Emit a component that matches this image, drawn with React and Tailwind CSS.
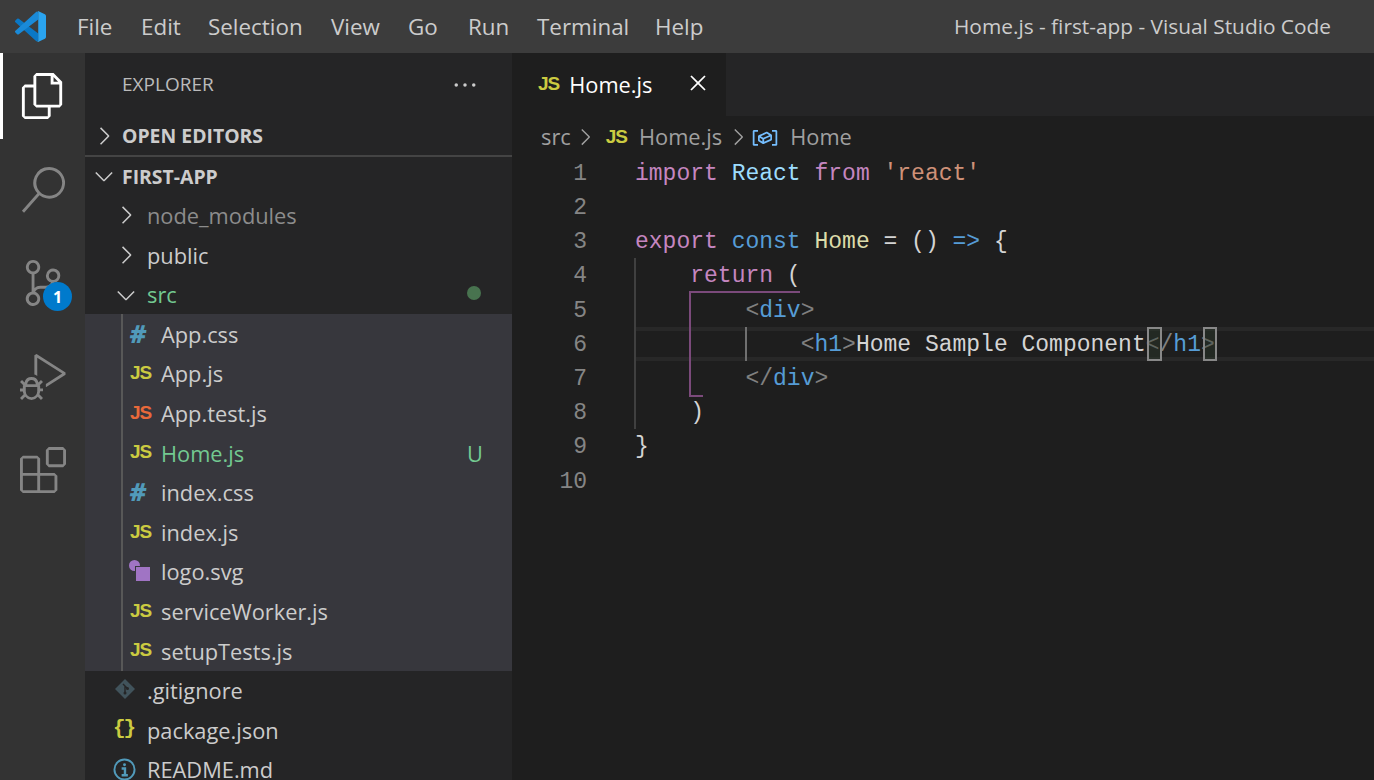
import React from "react";
import {
  VscFiles,
  VscSearch,
  VscSourceControl,
  VscDebugAlt,
  VscExtensions,
  VscChevronRight,
  VscChevronDown,
  VscClose,
  VscEllipsis,
  VscSymbolVariable,
} from "react-icons/vsc";

const menus = [
  ["File", "w-[64px]"],
  ["Edit", "w-[67px]"],
  ["Selection", "w-[123px]"],
  ["View", "w-[77px]"],
  ["Go", "w-[60px]"],
  ["Run", "w-[69px]"],
  ["Terminal", "w-[118px]"],
  ["Help", "w-[60px]"],
];

function Logo() {
  return (
    <svg viewBox="0 0 24 24" className="w-[31px] h-[31px] ml-[15px] mr-[31px]">
      <path
        fill="#0a78c6"
        d="M.33 7.26 1.65 6.06a1 1 0 0 1 1.28-.06L18 17.45v5.05a1.5 1.5 0 0 1-1.5.99L.33 8.74a1 1 0 0 1 0-1.48z"
      />
      <path
        fill="#1a8ad8"
        d="M.33 16.74 1.65 17.94a1 1 0 0 0 1.28.06L18 6.55V1.5A1.5 1.5 0 0 0 16.5.5L.33 15.26a1 1 0 0 0 0 1.48z"
      />
      <path
        fill="#2aa4f0"
        d="M16.5.5a1.49 1.49 0 0 1 1.71-.29l4.94 2.38A1.5 1.5 0 0 1 24 3.94v16.12a1.5 1.5 0 0 1-.85 1.35l-4.94 2.38a1.49 1.49 0 0 1-1.71-.29c.55.55 1.5.16 1.5-.62V1.12c0-.78-.95-1.17-1.5-.62z"
      />
    </svg>
  );
}

function JsIcon({ color = "text-[#cbcb41]" }) {
  return (
    <span className={`font-['Liberation_Sans'] font-bold text-[19px] leading-none tracking-[-1px] mb-[2px] ${color}`}>
      JS
    </span>
  );
}

function HashIcon() {
  return <span className="font-['Open_Sans'] font-extrabold text-[25px] leading-none -skew-x-6 mb-[2px] text-[#519aba]">#</span>;
}

function SvgFileIcon() {
  return (
    <svg viewBox="0 0 22 22" className="w-[22px] h-[22px] ml-[-2px] mb-[3px]">
      <circle cx="6.500" cy="6.500" r="5.500" fill="#a074c4" />
      <rect x="7" y="7" width="15" height="15" fill="#37373d" />
      <rect x="8" y="8" width="14" height="14" fill="#a074c4" />
    </svg>
  );
}

function GitIcon() {
  return (
    <svg viewBox="0 0 20 20" className="w-[20px] h-[20px] mb-[3px]">
      <path fill="#41535b" d="M10 0l10 10-10 10L0 10z" />
      <path stroke="#252526" strokeWidth="1.4" fill="none" d="M8 5l4.500 4.500M10 7.500V14" />
      <circle cx="10" cy="14" r="1.500" fill="#252526" />
      <circle cx="12.500" cy="9.500" r="1.500" fill="#252526" />
    </svg>
  );
}

function InfoIcon() {
  return (
    <svg viewBox="0 0 24 24" className="w-[23px] h-[23px]" fill="none">
      <circle cx="12" cy="12" r="10.500" stroke="#519aba" strokeWidth="2" />
      <circle cx="12" cy="7" r="1.500" fill="#519aba" />
      <path stroke="#519aba" strokeWidth="2.500" d="M9 11h3.500v7M9 18h6.500" />
    </svg>
  );
}

// one row of the tree, all rows have the same height
function Row({ pad, icon, iconClass = "w-[31px]", children, className = "", badge }) {
  return (
    <div className={`flex items-center h-[39.6px] shrink-0 ${pad} ${className}`}>
      {icon && <span className={`flex items-center shrink-0 ${iconClass}`}>{icon}</span>}
      <span className="flex-1 pt-[2px]">{children}</span>
      {badge}
    </div>
  );
}

const srcFiles = [
  ["App.css", <HashIcon />],
  ["App.js", <JsIcon />],
  ["App.test.js", <JsIcon color="text-[#e8693a]" />],
  ["Home.js", <JsIcon />],
  ["index.css", <HashIcon />],
  ["index.js", <JsIcon />],
  ["logo.svg", <SvgFileIcon />],
  ["serviceWorker.js", <JsIcon />],
  ["setupTests.js", <JsIcon />],
];

function Sidebar() {
  return (
    <div className="w-[427px] shrink-0 bg-[#252526] flex flex-col text-[#cccccc] text-[21.8px] overflow-hidden">
      <div className="flex items-center justify-between h-[63px] pl-[37px] pr-[33px] shrink-0">
        <span className="text-[19px] text-[#bbbbbb]">EXPLORER</span>
        <VscEllipsis className="text-[#cccccc] w-[28px] h-[28px]" />
      </div>
      <div className="flex items-center h-[39px] pl-[5px] border-b-2 border-[#444444] box-content shrink-0 font-bold text-[19.4px]">
        <VscChevronRight className="w-[28px] h-[28px] mr-[4px]" />
        <span>OPEN EDITORS</span>
      </div>
      <div className="flex items-center h-[38.6px] pl-[5px] shrink-0 font-bold text-[19.4px]">
        <VscChevronDown className="w-[28px] h-[28px] mr-[4px]" />
        <span>FIRST-APP</span>
      </div>
      <Row pad="pl-[27px]" iconClass="w-[35px]" icon={<VscChevronRight className="w-[28px] h-[28px]" />}>
        <span className="text-[#8c8c8c]">node_modules</span>
      </Row>
      <Row pad="pl-[27px]" iconClass="w-[35px]" icon={<VscChevronRight className="w-[28px] h-[28px]" />}>
        public
      </Row>
      <Row
        pad="pl-[27px] pr-[31px]"
        iconClass="w-[35px]"
        icon={<VscChevronDown className="w-[28px] h-[28px]" />}
        badge={<span className="w-[14px] h-[14px] rounded-full bg-[#48734f] mb-[3px]" />}
      >
        <span className="text-[#73c991]">src</span>
      </Row>
      <div className="bg-[#37373d] flex flex-col shrink-0 relative">
        <div className="absolute left-[36px] top-0 bottom-0 w-[2px] bg-[#585858]" />
        {srcFiles.map(([name, icon]) => (
          <Row
            key={name}
            pad="pl-[45px] pr-[29px]"
            icon={icon}
            iconClass="w-[31px]"
            badge={name === "Home.js" ? <span className="text-[#73c991] pt-[2px]">U</span> : null}
          >
            <span className={name === "Home.js" ? "text-[#73c991]" : ""}>{name}</span>
          </Row>
        ))}
      </div>
      <Row pad="pl-[30px]" icon={<GitIcon />} iconClass="w-[32px]">
        .gitignore
      </Row>
      <Row
        pad="pl-[28px]"
        iconClass="w-[34px]"
        icon={<span className="font-['Liberation_Mono'] font-bold text-[21px] text-[#cbcb41] tracking-[-2px] mb-[3px]">{"{}"}</span>}
      >
        package.json
      </Row>
      <Row pad="pl-[28px]" icon={<InfoIcon />} iconClass="w-[34px]">
        README.md
      </Row>
    </div>
  );
}

const k = "text-[#c586c0]";
const v = "text-[#9cdcfe]";
const s = "text-[#ce9178]";
const b = "text-[#569cd6]";
const f = "text-[#dcdcaa]";
const g = "text-[#808080]";

const lines = [
  [[k, "import"], ["", " "], [v, "React"], ["", " "], [k, "from"], ["", " "], [s, "'react'"]],
  [],
  [[k, "export"], ["", " "], [b, "const"], ["", " "], [f, "Home"], ["", " = () "], [b, "=>"], ["", " {"]],
  [["", "    "], [k, "return"], ["", " ("]],
  [["", "        "], [g, "<"], [b, "div"], [g, ">"]],
  [
    ["", "            "],
    [g, "<"],
    [b, "h1"],
    [g, ">"],
    ["", "Home Sample Component"],
    [g, "<"],
    [g, "/"],
    [b, "h1"],
    [g, ">"],
  ],
  [["", "        "], [g, "</"], [b, "div"], [g, ">"]],
  [["", "    )"]],
  [["", "}"]],
  [],
];

function Code() {
  return (
    <div className="relative flex-1 font-['Liberation_Mono'] text-[23px] text-[#d4d4d4]">
      {lines.map((tokens, i) => (
        <div key={i} className="relative flex items-center h-[34.2px] whitespace-pre">
          {i === 5 && (
            <div className="absolute left-[123px] right-0 top-0 bottom-0 border-y-[4px] border-[#282828]" />
          )}
          <div className="w-[75px] pt-[2px] text-right text-[#858585] shrink-0">{i + 1}</div>
          <div className="pl-[48px] pt-[2px] relative">
            {tokens.map(([c, t], j) => (
              <span key={j} className={c}>
                {t}
              </span>
            ))}
          </div>
        </div>
      ))}
      {/* indent guides */}
      <div className="absolute left-[122px] top-[102px] w-[2px] h-[171px] bg-[#404040]" />
      <div className="absolute left-[233px] top-[171px] w-[2px] h-[34px] bg-[#707070]" />
      {/* bracket pair colour */}
      <div className="absolute left-[177px] top-[135px] w-[111px] h-[2px] bg-[#7b4a7b]" />
      <div className="absolute left-[177px] top-[135px] w-[2px] h-[106px] bg-[#7b4a7b]" />
      <div className="absolute left-[177px] top-[239px] w-[14px] h-[2px] bg-[#7b4a7b]" />
      {/* matching bracket boxes */}
      <div className="absolute left-[635px] top-[171px] w-[15px] h-[34px] border-2 border-[#888888] bg-[#2a3a2a]/40" />
      <div className="absolute left-[691px] top-[171px] w-[14px] h-[34px] border-2 border-[#888888] bg-[#2a3a2a]/40" />
    </div>
  );
}

function Editor() {
  return (
    <div className="flex-1 bg-[#1e1e1e] flex flex-col min-w-0">
      <div className="flex h-[63px] bg-[#252526] shrink-0">
        <div className="w-[214px] bg-[#1e1e1e] flex items-center pl-[26px] text-[21.8px] text-white">
          <JsIcon />
          <span className="ml-[10px] pt-[2px]">Home.js</span>
          <VscClose className="w-[28px] h-[28px] ml-[32px] mb-[3px]" />
        </div>
      </div>
      <div className="flex items-center h-[40px] shrink-0 pl-[29px] pt-[2px] text-[21.8px] text-[#a0a0a0]">
        <span>src</span>
        <VscChevronRight className="w-[26px] h-[26px] ml-[1px] mr-[8px]" />
        <JsIcon />
        <span className="ml-[12px]">Home.js</span>
        <VscChevronRight className="w-[26px] h-[26px] ml-[3px]" />
        <VscSymbolVariable className="w-[28px] h-[28px] text-[#75beff]" />
        <span className="ml-[11px]">Home</span>
      </div>
      <Code />
    </div>
  );
}

function ActivityBar() {
  const icons = [VscFiles, VscSearch, VscSourceControl, VscDebugAlt, VscExtensions];
  return (
    <div className="w-[85px] shrink-0 bg-[#333333] flex flex-col gap-[7.6px]">
      {icons.map((Icon, i) => (
        <div key={i} className="relative h-[86px] flex items-center justify-center">
          {i === 0 && <div className="absolute left-0 top-0 bottom-0 w-[3px] bg-white" />}
          <Icon className={`w-[46px] h-[46px] ${i === 0 ? "text-white" : "text-[#858585]"}`} />
          {i === 2 && (
            <span className="absolute left-[43px] top-[42px] w-[29px] h-[29px] rounded-full bg-[#007acc] text-white text-[16px] font-bold flex items-center justify-center">
              1
            </span>
          )}
        </div>
      ))}
    </div>
  );
}

export default function App() {
  return (
    <div className="w-[1374px] h-[780px] overflow-hidden flex flex-col font-['Open_Sans',sans-serif] bg-[#1e1e1e]">
      <div className="flex items-center h-[53px] bg-[#3c3c3c] text-[#cccccc] text-[22.4px] shrink-0">
        <Logo />
        {menus.map(([m, w]) => (
          <span key={m} className={w}>
            {m}
          </span>
        ))}
        <span className="ml-auto mr-[43px] text-[20.85px]">Home.js - first-app - Visual Studio Code</span>
      </div>
      <div className="flex flex-1 min-h-0">
        <ActivityBar />
        <Sidebar />
        <Editor />
      </div>
    </div>
  );
}
